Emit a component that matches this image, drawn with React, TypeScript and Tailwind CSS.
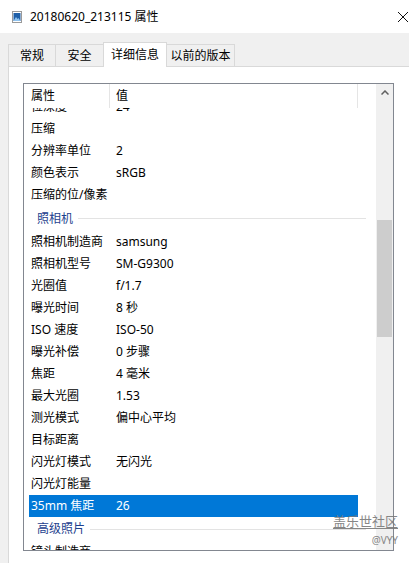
import React from 'react';

const imageRows = [
  ['位深度', '24'],
  ['压缩', ''],
  ['分辨率单位', '2'],
  ['颜色表示', 'sRGB'],
  ['压缩的位/像素', ''],
];

const cameraRows = [
  ['照相机制造商', 'samsung'],
  ['照相机型号', 'SM-G9300'],
  ['光圈值', 'f/1.7'],
  ['曝光时间', '8 秒'],
  ['ISO 速度', 'ISO-50'],
  ['曝光补偿', '0 步骤'],
  ['焦距', '4 毫米'],
  ['最大光圈', '1.53'],
  ['测光模式', '偏中心平均'],
  ['目标距离', ''],
  ['闪光灯模式', '无闪光'],
  ['闪光灯能量', ''],
  ['35mm 焦距', '26'],
];

const tabs = [
  { label: '常规', w: 'w-[47px]', cls: 'border-l border-t' },
  { label: '安全', w: 'w-[48px]', cls: 'border-l border-t' },
  { label: '详细信息', w: 'w-[64px]', cls: 'border-l border-t border-r', active: true },
  { label: '以前的版本', w: 'w-[68px]', cls: 'border-t border-r' },
];

function Row({ label, value, selected, className = '' }: { label: string; value: string; selected?: boolean; className?: string }) {
  return (
    <div
      className={`h-[22px] ml-[5px] w-[329px] flex items-center shrink-0 ${selected ? 'bg-[#0078d7] text-white' : 'text-black'} ${className}`}
    >
      <span className="w-[87px] pl-[2px] whitespace-nowrap">{label}</span>
      <span className="whitespace-nowrap">{value}</span>
    </div>
  );
}

function Group({ title, h }: { title: string; h: string }) {
  return (
    <div className={`${h} flex items-center pl-[13px] pr-[10px] shrink-0`}>
      <span className="text-[#1e3f8e] whitespace-nowrap">{title}</span>
      <div className="flex-1 h-px bg-[#e3e3e3] ml-[5px]" />
    </div>
  );
}

export default function App() {
  return (
    <div className="w-[409px] h-[563px] overflow-hidden bg-[#f0f0f0] flex flex-col relative text-[12px] font-['Noto_Sans','Noto_Sans_CJK_SC',sans-serif]">
      {/* title bar */}
      <div className="h-[33px] bg-white flex items-center pl-[12px] pt-[1px] shrink-0">
        <svg width="10" height="12" viewBox="0 0 10 12">
          <rect x="0.5" y="0.5" width="9" height="11" fill="#fff" stroke="#9a9a9a" />
          <rect x="1.5" y="2" width="7" height="8" fill="#1f5fa8" />
          <polygon points="1.5,10 4,6 5.5,8 6.5,7 8.5,10" fill="#8fc3ef" />
        </svg>
        <span className="ml-[8px] text-[12px] text-black">20180620_213115 属性</span>
        <svg className="ml-auto mr-[1px]" width="10" height="10" viewBox="0 0 10 10">
          <path d="M0 0L10 10M10 0L0 10" stroke="#111" strokeWidth="1" />
        </svg>
      </div>

      {/* tabs */}
      <div className="mt-[9px] h-[25px] flex items-end pl-[8px] shrink-0">
        {tabs.map((t) =>
          t.active ? (
            <div
              key={t.label}
              className={`${t.w} h-[25px] ${t.cls} border-[#d9d9d9] bg-white relative z-10 flex items-center justify-center pb-[1px]`}
            >
              {t.label}
            </div>
          ) : (
            <div
              key={t.label}
              className={`${t.w} h-[23px] ${t.cls} border-[#d9d9d9] bg-[#f0f0f0] flex items-center justify-center`}
            >
              {t.label}
            </div>
          )
        )}
      </div>

      {/* tab panel */}
      <div className="flex-1 bg-white border-l border-t border-[#d9d9d9] ml-[8px] -mt-[1px] pt-[16px] pl-[14px]">
        <div className="w-[371px] h-[468px] border border-[#828790] flex">
          <div className="flex-1 flex flex-col overflow-hidden">
            <div className="h-[24px] flex shrink-0">
              <div className="w-[86px] pl-[7px] flex items-center border-r border-[#e5e5e5]">属性</div>
              <div className="w-[248px] pl-[6px] flex items-center border-r border-[#e5e5e5]">值</div>
            </div>
            <div className="flex-1 overflow-hidden flex flex-col">
              {imageRows.map(([l, v], i) => (
                <Row key={l} label={l} value={v} className={i === 0 ? '-mt-[12px]' : ''} />
              ))}
              <Group title="照相机" h="h-[25px]" />
              {cameraRows.map(([l, v]) => (
                <Row key={l} label={l} value={v} selected={l === '35mm 焦距'} />
              ))}
              <Group title="高级照片" h="h-[24px]" />
              <Row label="镜头制造商" value="" />
            </div>
          </div>
          <div className="w-[17px] bg-[#f0f0f0] flex flex-col shrink-0">
            <div className="h-[17px] flex items-center justify-center">
              <svg width="8" height="5" viewBox="0 0 8 5">
                <path d="M0.5 4.5L4 1L7.5 4.5" stroke="#606060" strokeWidth="1.5" fill="none" />
              </svg>
            </div>
            <div className="mt-[119px] h-[117px] mx-[1px] bg-[#cdcdcd]" />
          </div>
        </div>
      </div>

      {/* watermark */}
      <div className="absolute right-[11px] top-[512px] flex flex-col items-end text-[#7a7a7a] opacity-90">
        <span className="text-[13px] leading-[18px] underline underline-offset-2">盖乐世社区</span>
        <span className="text-[10px] leading-[12px] mt-[4px]">@VYY</span>
      </div>
    </div>
  );
}
